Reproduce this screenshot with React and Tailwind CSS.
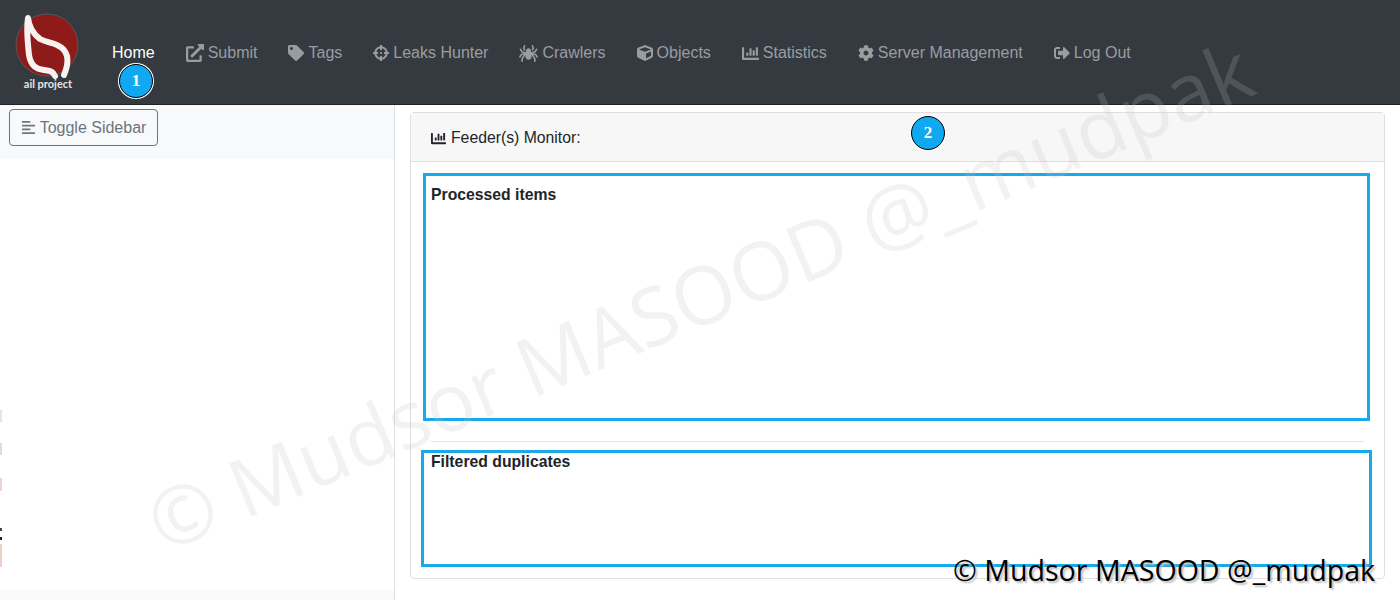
import React from "react";
import {
  FaExternalLinkAlt,
  FaTag,
  FaCrosshairs,
  FaSpider,
  FaCube,
  FaChartBar,
  FaCog,
  FaSignOutAlt,
  FaAlignLeft,
} from "react-icons/fa";

const navItems = [
  { label: "Submit", icon: FaExternalLinkAlt, size: "w-[18px] h-[18px]" },
  { label: "Tags", icon: FaTag, size: "w-[16px] h-[16px]" },
  { label: "Leaks Hunter", icon: FaCrosshairs, size: "w-[16px] h-[16px]" },
  { label: "Crawlers", icon: FaSpider, size: "w-[19px] h-[19px]" },
  { label: "Objects", icon: FaCube, size: "w-[16px] h-[16px]" },
  { label: "Statistics", icon: FaChartBar, size: "w-[17px] h-[17px]" },
  { label: "Server Management", icon: FaCog, size: "w-[16px] h-[16px]" },
  { label: "Log Out", icon: FaSignOutAlt, size: "w-[16px] h-[16px]" },
];

// leftovers of the cropped page along the left edge
const edgeMarks = [
  "top-[410px] h-[12px] bg-[#e5e5e5]",
  "top-[443px] h-[12px] bg-[#d5e3d0]",
  "top-[478px] h-[13px] bg-[#ead4d4]",
  "top-[528px] h-[3px] bg-[#444444]",
  "top-[537px] h-[3px] bg-[#222222]",
  "top-[544px] h-[23px] bg-[#ecd0cc]",
];

function Logo() {
  return (
    <div className="relative w-[64px] h-[92px] shrink-0">
      <svg width="64" height="92" viewBox="15 0 64 92">
        <circle cx="47" cy="45" r="31" fill="#8f1a1a" stroke="#55585a" strokeWidth="1" />
        <path
          d="M55 76 C53 71 50 71 44 70 C36 69 31 66 29 55 C28 45 26 30 28 18 C29 26 32 33 40 39 C47 43 55 42 62 48 C69 54 69 63 64 75"
          fill="none"
          stroke="#f7f1ef"
          strokeWidth="6"
          strokeLinecap="round"
          strokeLinejoin="round"
        />
      </svg>
      <span className="absolute left-[1px] top-[77px] w-[64px] text-center text-[11px] leading-[14px] font-bold whitespace-nowrap text-[#e4e4e4] font-['Lato',sans-serif]">
        ail project
      </span>
    </div>
  );
}

function Badge({ n, className }) {
  return (
    <div
      className={`absolute w-[34px] h-[34px] rounded-full bg-[#10a8f0] border border-black ring-1 ring-white flex items-center justify-center text-white text-[17px] font-bold font-['Liberation_Serif',serif] ${className}`}
    >
      {n}
    </div>
  );
}

export default function App() {
  return (
    <div className="relative w-[1400px] h-[600px] overflow-hidden bg-white font-['Liberation_Sans',sans-serif] text-[16px] text-[#212529]">
      <nav className="h-[105px] bg-[#343a40] border-b border-[#222] flex items-start pl-[15px]">
        <Logo />
        <ul className="flex items-center gap-[31px] pt-[41px] pl-[33px] leading-[24px]">
          <li className="text-white">Home</li>
          {navItems.map((item) => {
            const Icon = item.icon;
            return (
              <li key={item.label} className="flex items-center gap-[4px] text-[#9a9da0] whitespace-nowrap">
                <Icon className={item.size} />
                {item.label}
              </li>
            );
          })}
        </ul>
      </nav>

      <div className="flex h-[495px]">
        <aside className="w-[395px] shrink-0 border-r border-[#dee2e6] bg-[#f8f9fa] flex flex-col">
          <div className="h-[54px] pl-[9px] pt-[4px]">
            <button className="h-[37px] w-[149px] border border-[#6c757d] rounded-[4px] flex items-center justify-center gap-[4px] text-[#6c757d]">
              <FaAlignLeft className="w-[15px] h-[15px]" />
              Toggle Sidebar
            </button>
          </div>
          <div className="h-[431px] bg-white"></div>
        </aside>

        <main className="flex-1 pl-[15px] pr-[15px] pt-[7px] text-[15.75px]">
          <div className="h-[467px] border border-[#dfdfdf] rounded-[4px] flex flex-col">
            <div className="h-[49px] shrink-0 bg-[#f7f7f7] border-b border-[#dfdfdf] flex items-center gap-[5px] pl-[20px] pt-[2px]">
              <FaChartBar className="w-[15px] h-[15px]" />
              Feeder(s) Monitor:
            </div>
            <div className="px-[20px] pt-[21px]">
              <div className="h-[246px] font-bold leading-[24px]">Processed items</div>
              <hr className="mt-[12px] border-[#e5e5e5]" />
              <div className="mt-[8px] font-bold leading-[24px]">Filtered duplicates</div>
            </div>
          </div>
        </main>
      </div>

      {edgeMarks.map((mark) => (
        <div key={mark} className={`absolute left-0 w-[2px] ${mark}`}></div>
      ))}

      {/* annotations on top of the screenshot */}
      <div className="absolute left-[423px] top-[173px] w-[947px] h-[248px] border-[3px] border-[#1aa9e8]"></div>
      <div className="absolute left-[421px] top-[450px] w-[951px] h-[117px] border-[3px] border-[#1aa9e8]"></div>
      <Badge n="1" className="left-[119px] top-[64px]" />
      <Badge n="2" className="left-[911px] top-[116px]" />

      <div className="absolute left-[699px] top-[295px] -translate-x-1/2 -translate-y-1/2 rotate-[-22.8deg] whitespace-nowrap text-[80.5px] leading-none text-[#bebebe]/20 font-['Open_Sans',sans-serif] pointer-events-none">
        © Mudsor MASOOD @_mudpak
      </div>
      <div className="absolute left-[953px] top-[551px] whitespace-nowrap text-[28.6px] leading-[38px] text-black [text-shadow:2px_2px_2px_#bbb] font-['Open_Sans',sans-serif]">
        © Mudsor MASOOD @_mudpak
      </div>
    </div>
  );
}
